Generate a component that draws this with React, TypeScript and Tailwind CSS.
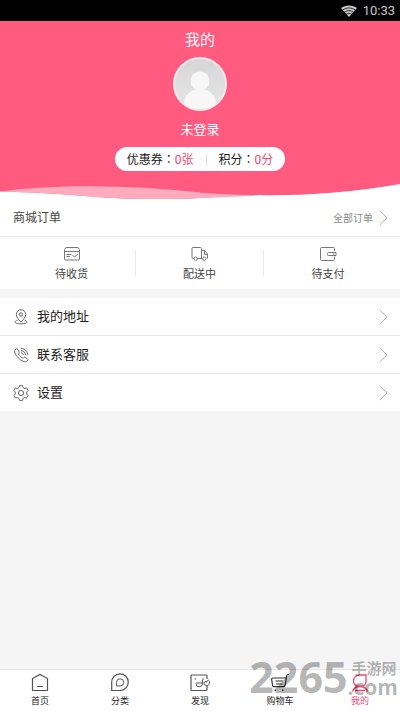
import React from 'react';

function ChevronRight() {
  return (
    <svg viewBox="0 0 9 16" className="h-4 w-[9px] shrink-0" fill="none" stroke="#b0b0b0" strokeWidth="1" aria-hidden="true">
      <path d="M.8 1 8 8 .8 15" />
    </svg>
  );
}

function BoxIcon() {
  return (
    <svg viewBox="0 0 18 16" className="h-4 w-[18px]" fill="none" stroke="#777" strokeWidth="1" aria-hidden="true">
      <path d="M3 1.500h12l1.500 2v9.500a1 1 0 0 1-1 1h-13a1 1 0 0 1-1-1V3.500zM1.500 5.500h15M3.500 8.500h5M3.500 10.500h3.500M9.500 9l2 2 3.500-3" />
    </svg>
  );
}

function TruckIcon() {
  return (
    <svg viewBox="0 0 18 16" className="h-4 w-[18px]" fill="none" stroke="#777" strokeWidth="1" aria-hidden="true">
      <path d="M3 12.500H2a1 1 0 0 1-1-1v-9a1 1 0 0 1 1-1h7.500a1 1 0 0 1 1 1v10M6.500 12.500h5M10.500 4.500h3l3 3.500v4a.5.500 0 0 1-.5.500M13.500 4.500v4h3" />
      <circle cx="4.700" cy="12.700" r="1.700" />
      <circle cx="13.300" cy="12.700" r="1.700" />
    </svg>
  );
}

function WalletIcon() {
  return (
    <svg viewBox="0 0 18 16" className="h-4 w-[18px]" fill="none" stroke="#777" strokeWidth="1" aria-hidden="true">
      <path d="M15.500 5V2.500a1 1 0 0 0-1-1h-12a1 1 0 0 0-1 1v11a1 1 0 0 0 1 1h12a1 1 0 0 0 1-1V10.500M17 6.500H9.500a1 1 0 0 0-1 1v1a1 1 0 0 0 1 1H17zM14 8h1.500" />
    </svg>
  );
}

function PinIcon() {
  return (
    <svg viewBox="0 0 16 16" className="size-4" fill="none" stroke="#555" strokeWidth=".9" aria-hidden="true">
      <path d="M8 13.200C5.500 10.500 3.300 8 3.300 5.500a4.700 4.700 0 0 1 9.400 0c0 2.500-2.200 5-4.700 7.700z" />
      <circle cx="8" cy="5.500" r="1.700" />
      <path d="M4.500 11.200c-4 1.300-3.500 3.600 3.500 3.600s7.500-2.300 3.500-3.600" />
    </svg>
  );
}

function PhoneIcon() {
  return (
    <svg viewBox="0 0 16 16" className="size-4" fill="none" stroke="#555" strokeWidth=".9" aria-hidden="true">
      <path d="M3.200 1.800 1.900 3c-1 1 .1 4.500 3.500 8s7 4.500 8.200 3.400l1-1.200c.4-.5.300-1-.2-1.400l-2.200-1.500c-.5-.3-.9-.2-1.300.2l-.8.800C8.500 11 6 8.500 5.300 7l.7-.8c.4-.4.400-.9.100-1.300L4.600 2c-.4-.6-.9-.7-1.400-.2zM8 5.800c1.300 0 2.300 1 2.300 2.300M8 3.600c2.500 0 4.500 2 4.500 4.500M8 1.400c3.700 0 6.700 3 6.700 6.700" />
    </svg>
  );
}

function GearIcon() {
  return (
    <svg viewBox="0 0 16 16" className="size-4" fill="none" stroke="#555" strokeWidth=".9" strokeLinejoin="round" aria-hidden="true">
      <path d="M6.500.6h3l.5 2 1.600.9 2-.6 1.500 2.600L13.700 7v2l1.400 1.500-1.500 2.600-2-.6-1.600.9-.5 2h-3l-.5-2-1.600-.9-2 .6L.9 10.500 2.300 9V7L.9 5.500l1.500-2.600 2 .6L6 2.600z" />
      <circle cx="8" cy="8" r="2.600" />
    </svg>
  );
}

function HomeIcon() {
  return (
    <svg viewBox="0 0 20 20" className="size-5" fill="none" stroke="#555" strokeWidth="1.200" aria-hidden="true">
      <path d="M2.500 5.500 10 1.500l7.500 4V17.500h-15zM7 13.500h6" />
    </svg>
  );
}

function CategoryIcon() {
  return (
    <svg viewBox="0 0 20 20" className="size-5" fill="none" stroke="#555" strokeWidth="1.200" aria-hidden="true">
      <path d="M1.700 17.500V9.500a8.300 8.300 0 1 1 8.300 8z" />
      <path d="M6.500 13V9.500a3.600 3.600 0 1 1 3.600 3.500z" strokeWidth="1" />
    </svg>
  );
}

function DiscoverIcon() {
  return (
    <svg viewBox="0 0 20 20" className="size-5" fill="none" stroke="#555" strokeWidth="1.200" aria-hidden="true">
      <path d="M17 6V3a1 1 0 0 0-1-1H2a1 1 0 0 0-1 1v13.500a1 1 0 0 0 1 1h14a1 1 0 0 0 1-1V13M4.500 6h1.500" />
      <path d="M6 10h6.500v.5a3.200 3.200 0 0 1-6.500 0M12.500 10V6.500M12.500 6h1.500M14 10c0-1.500 1.500-2 3-1 .3-2.500 2.500-2.300 2.500 0 0 2-1 4-2.500 4l-3-1.500z" strokeWidth="1" />
    </svg>
  );
}

function CartIcon() {
  return (
    <svg viewBox="0 0 20 20" className="size-5" fill="none" stroke="#333" strokeWidth="1.200" aria-hidden="true">
      <path d="M19 1.500h-1c-.8 0-1.200.5-1.400 1.300L15 12.500c-.2.800-.8 1.200-1.700 1.200H4c-1 0-1.500-.5-1.500-1.500L1.700 6.500c-.1-1 .4-1.500 1.300-1.500h13M5.500 8H13M6 11h6.500" />
      <path d="M4.500 17.200h1.500M12 17.200h1.500" strokeWidth="1.600" />
    </svg>
  );
}

function MineIcon() {
  return (
    <svg viewBox="0 0 20 20" className="size-5" fill="none" stroke="#ee4a72" strokeWidth="1.300" aria-hidden="true">
      <path d="M3.500 8.500C3.500 4.500 6 2 10 2h6v6.500c0 3-2.500 5-6 5s-6.500-2-6.500-5z" />
      <path d="M2.500 18.500c1-3 3.500-5 7.500-5s6.500 2 7.500 5M5 17.500h10" />
    </svg>
  );
}

const orders = [
  { label: '待收货', icon: <BoxIcon /> },
  { label: '配送中', icon: <TruckIcon /> },
  { label: '待支付', icon: <WalletIcon /> },
];

const links = [
  { label: '我的地址', icon: <PinIcon /> },
  { label: '联系客服', icon: <PhoneIcon /> },
  { label: '设置', icon: <GearIcon /> },
];

const tabs = [
  { label: '首页', icon: <HomeIcon />, active: false },
  { label: '分类', icon: <CategoryIcon />, active: false },
  { label: '发现', icon: <DiscoverIcon />, active: false },
  { label: '购物车', icon: <CartIcon />, active: false },
  { label: '我的', icon: <MineIcon />, active: true },
];

function Colon() {
  return <span lang="zh-TW" className="font-['Noto_Sans_CJK_TC',sans-serif]">：</span>;
}

export default function App() {
  return (
    <div className="relative flex min-h-screen flex-col bg-[#f5f5f5] font-['Roboto','Noto_Sans_CJK_SC',sans-serif] text-[#444]">
      <div className="flex h-[21px] items-center justify-end gap-1.5 bg-black pr-[5px] text-[13px] text-[#c8c8c8]">
        <svg viewBox="0 0 16 12" className="h-3 w-4" aria-hidden="true">
          <path d="M8 12 0 3C4.500-.5 11.500-.5 16 3z" fill="#c8c8c8" />
          <path d="M1.500 5.200c4-3 9-3 13 0M3.300 7.300c3-2.200 6.400-2.200 9.400 0M5.200 9.300c1.800-1.300 3.800-1.300 5.600 0" fill="none" stroke="#000" strokeWidth=".8" />
        </svg>
        <span>10:33</span>
      </div>

      <header className="flex flex-col items-center bg-[#ff5a7f] pt-2 text-white">
        <h1 className="text-[15px] leading-[22px]">我的</h1>
        <svg viewBox="0 0 54 54" className="mt-1.5 size-[54px]" role="img" aria-label="头像">
          <defs>
            <linearGradient id="avatar" x1="0" y1="0" x2="0" y2="1">
              <stop offset="0" stopColor="#d6d6d6" />
              <stop offset="1" stopColor="#e6e6e6" />
            </linearGradient>
            <clipPath id="disc"><circle cx="27" cy="27" r="25.500" /></clipPath>
          </defs>
          <circle cx="27" cy="27" r="26" fill="url(#avatar)" stroke="#ffe6ec" strokeWidth="2" />
          <g clipPath="url(#disc)" fill="#f7f7f7">
            <circle cx="27" cy="24" r="9.500" />
            <path d="M11 54V47c0-9 7-15 16-15s16 6 16 15v7z" />
          </g>
        </svg>
        <p className="mt-2 text-[13px] leading-[22px]">未登录</p>
        <div className="mt-1.5 flex h-6 items-center rounded-full bg-white px-3 pt-px text-xs text-[#222]">
          <span>优惠券<Colon /><span className="text-[#ee4a72]">0张</span></span>
          <span className="mx-3 h-3 w-px bg-[#ddd]" />
          <span>积分<Colon /><span className="text-[#ee4a72]">0分</span></span>
        </div>
        <svg viewBox="0 0 400 29" preserveAspectRatio="none" className="h-[29px] w-full" aria-hidden="true">
          <path d="M0 29V20.500C30 21 60 23 85 25 130 29 170 28.500 200 27L250 24C310 25 360 19 400 12.500V29z" fill="#fff" />
          <path d="M0 20.500C60 13 130 14 200 21.500L260 24.500 200 27C170 28.500 130 29 85 25 60 23 30 21 0 20.500z" fill="#ffaabd" />
          <path d="M200 21.500C270 27 340 24 400 13V0H200z" fill="#ff5a7f" />
        </svg>
      </header>

      <main className="flex flex-1 flex-col">
        <section className="bg-white">
          <div className="flex h-[37px] items-center justify-between border-b border-[#e8e8e8] pr-3 pl-[13px]">
            <h2 className="text-xs leading-[18px]">商城订单</h2>
            <a href="#orders" className="flex items-center gap-1.5 text-[10px] text-[#888]">全部订单<ChevronRight /></a>
          </div>
          <div className="grid h-[52px] grid-cols-3 px-2">
            {orders.map((item, i) => (
              <div key={item.label} className="flex items-center">
                <button type="button" className="flex flex-1 flex-col items-center gap-1 pt-1 text-[11px] leading-[18px]">
                  {item.icon}
                  {item.label}
                </button>
                {i < 2 && <span className="h-[26px] w-px bg-[#e8e8e8]" />}
              </div>
            ))}
          </div>
        </section>

        <nav className="mt-[9px] bg-white">
          {links.map((item) => (
            <a key={item.label} href="#account" className="flex items-center border-b border-[#e8e8e8] pr-3 pl-[13px] text-[13px] leading-[37px] text-[#222] last:border-b-0">
              {item.icon}
              <span className="ml-2 flex-1">{item.label}</span>
              <ChevronRight />
            </a>
          ))}
        </nav>
      </main>

      <nav className="grid h-[42px] grid-cols-5 border-t border-[#e5e5e5] bg-white">
        {tabs.map((tab) => (
          <a key={tab.label} href="#tab" className={`flex flex-col items-center pt-[3px] text-[9px] leading-4 ${tab.active ? 'text-[#ee4a72]' : 'text-[#222]'}`}>
            {tab.icon}
            <span>{tab.label}</span>
          </a>
        ))}
      </nav>

      <div className="pointer-events-none absolute right-0.5 bottom-3.5 flex items-end font-['Open_Sans','Noto_Sans_CJK_SC',sans-serif] font-bold text-black/30">
        <span className="text-[43px] leading-10">2265</span>
        <span className="flex flex-col">
          <span className="pl-1 text-[15px] leading-[18px]">手游网</span>
          <span className="text-[21px] leading-5">.com</span>
        </span>
      </div>
    </div>
  );
}
